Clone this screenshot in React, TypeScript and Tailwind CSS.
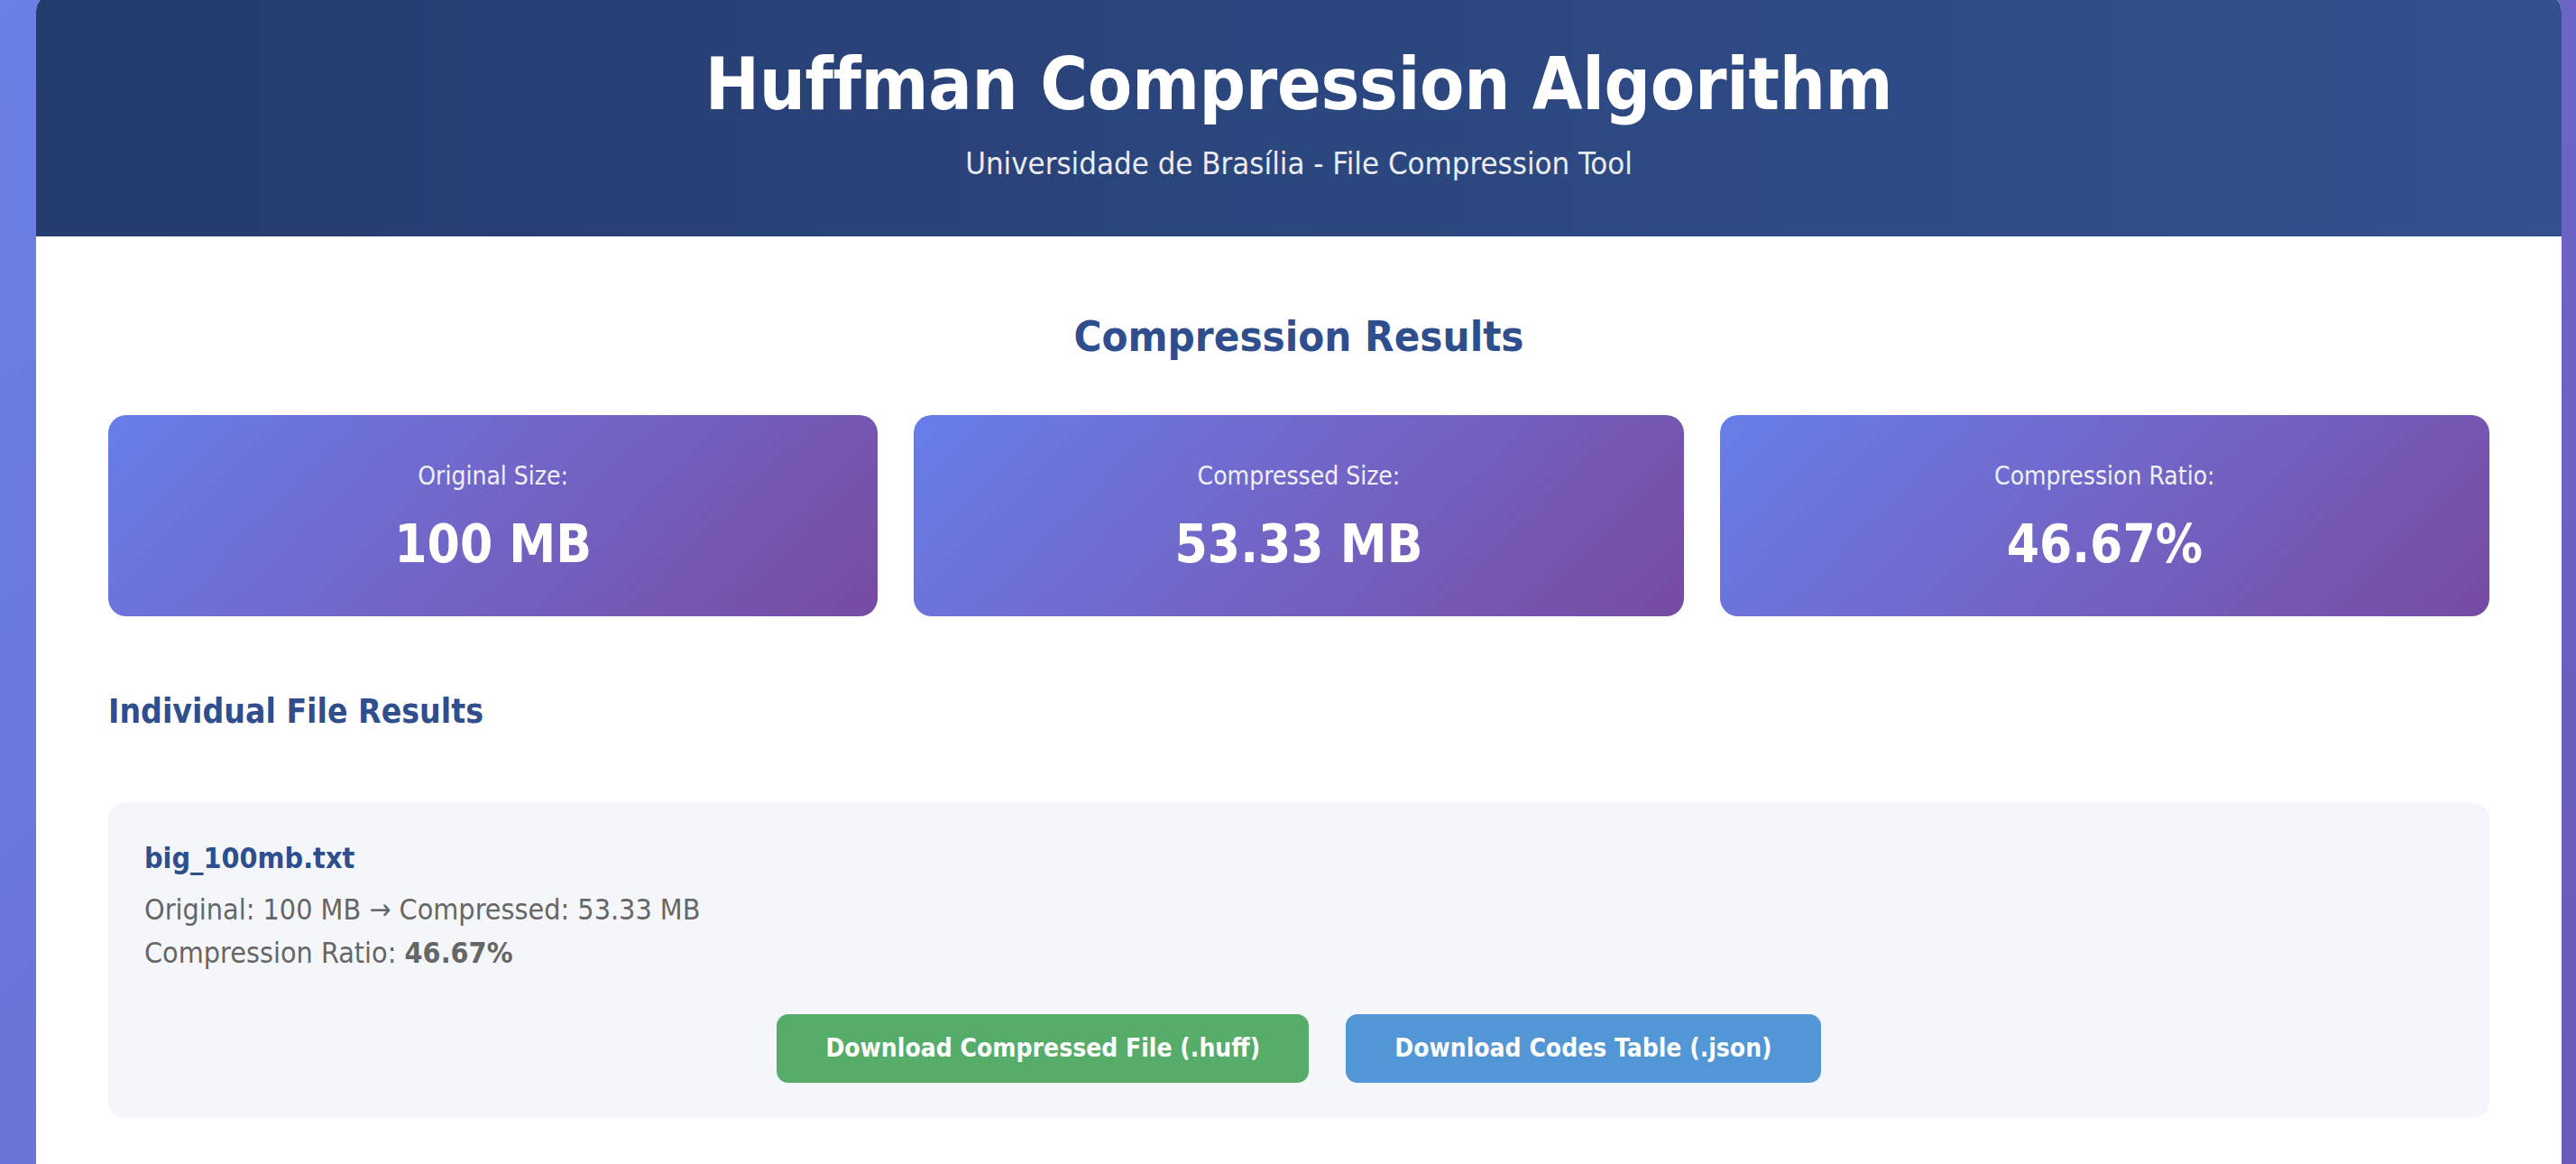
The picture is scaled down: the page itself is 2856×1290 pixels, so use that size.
const font = "font-['DejaVu_Sans_Condensed','DejaVu_Sans',Verdana,sans-serif]";

const stats = [
  { label: "Original Size:", value: "100 MB" },
  { label: "Compressed Size:", value: "53.33 MB" },
  { label: "Compression Ratio:", value: "46.67%" },
];

function StatCard({ label, value }: { label: string; value: string }) {
  return (
    <div className="flex h-[223px] flex-col items-center rounded-[20px] bg-linear-135 from-[#667eea] to-[#764ba2] pt-[51px] text-white">
      <div className="text-[28px] leading-[34px] text-white/90">{label}</div>
      <div className="mt-[23px] text-[58px] font-bold leading-[70px]">{value}</div>
    </div>
  );
}

function FileResult() {
  return (
    <div className="rounded-[18px] bg-[#f5f6fa] px-[40px] pt-[41px] pb-[39px]">
      <div className="text-[32px] font-bold leading-[40px] text-[#2e4e8e]">big_100mb.txt</div>
      <div className="mt-[13px] text-[32px] leading-[48px] text-[#666666]">
        <div>Original: 100 MB → Compressed: 53.33 MB</div>
        <div>
          Compression Ratio: <span className="font-bold">46.67%</span>
        </div>
      </div>
      <div className="mt-[44px] flex justify-center gap-[41px]">
        <button className="h-[76px] rounded-[13px] bg-[#56ad6a] px-[54px] text-[28px] font-bold text-white">
          Download Compressed File (.huff)
        </button>
        <button className="h-[76px] rounded-[13px] bg-[#5296d5] px-[54px] text-[28px] font-bold text-white">
          Download Codes Table (.json)
        </button>
      </div>
    </div>
  );
}

export default function App() {
  return (
    <div className={`min-h-screen overflow-hidden bg-linear-135 from-[#6a80e6] to-[#6a5ab8] ${font}`}>
      <div className="ml-[40px] mt-[-7px] w-[2800px] overflow-hidden rounded-[20px] bg-white">
        <header className="bg-linear-to-r from-[#243b6e] to-[#33518f] pt-[51px] pb-[61px] text-center text-white">
          <h1 className="text-[80px] font-bold leading-[100px] tracking-[-0.3px]">Huffman Compression Algorithm</h1>
          <p className="mt-[17px] text-[34.5px] leading-[40px] text-white/90">
            Universidade de Brasília - File Compression Tool
          </p>
        </header>

        <main className="px-[80px] pt-[82px] pb-[80px]">
          <h2 className="text-center text-[47px] font-bold leading-[58px] text-[#2e4e8e]">
            Compression Results
          </h2>

          <div className="mt-[58px] grid grid-cols-3 gap-[40px]">
            {stats.map((s) => (
              <StatCard key={s.label} label={s.label} value={s.value} />
            ))}
          </div>

          <h3 className="mt-[84px] text-[37px] font-bold leading-[44px] text-[#2e4e8e]">
            Individual File Results
          </h3>

          <div className="mt-[79px]">
            <FileResult />
          </div>
        </main>
      </div>
    </div>
  );
}
